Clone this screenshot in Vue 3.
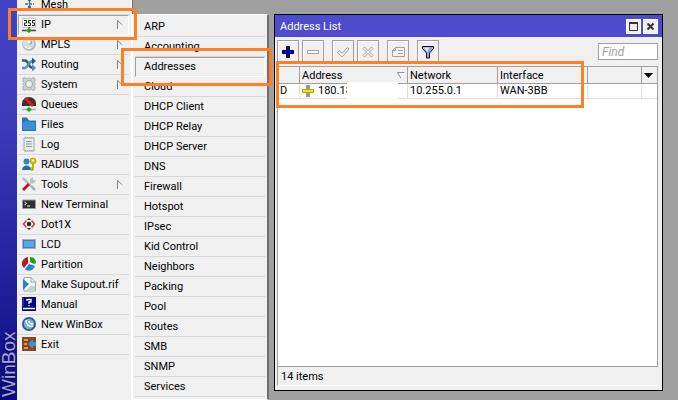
<script setup>
import { ref } from 'vue'

const menu = [
  { label: 'Mesh', icon: 'mesh' },
  { label: 'IP', icon: 'ip', sub: true, active: true },
  { label: 'MPLS', icon: 'mpls', sub: true },
  { label: 'Routing', icon: 'routing', sub: true },
  { label: 'System', icon: 'system', sub: true },
  { label: 'Queues', icon: 'queues' },
  { label: 'Files', icon: 'files' },
  { label: 'Log', icon: 'log' },
  { label: 'RADIUS', icon: 'radius' },
  { label: 'Tools', icon: 'tools', sub: true },
  { label: 'New Terminal', icon: 'terminal' },
  { label: 'Dot1X', icon: 'dot1x' },
  { label: 'LCD', icon: 'lcd' },
  { label: 'Partition', icon: 'partition' },
  { label: 'Make Supout.rif', icon: 'supout' },
  { label: 'Manual', icon: 'manual' },
  { label: 'New WinBox', icon: 'winbox' },
  { label: 'Exit', icon: 'exit' }
]

const submenu = [
  'ARP', 'Accounting', 'Addresses', 'Cloud', 'DHCP Client', 'DHCP Relay', 'DHCP Server',
  'DNS', 'Firewall', 'Hotspot', 'IPsec', 'Kid Control', 'Neighbors', 'Packing', 'Pool',
  'Routes', 'SMB', 'SNMP', 'Services'
]

const icons = {
  mesh: '<path d="M3 7h9M7.500 0v14" stroke="#3d6c96" stroke-width="1.500" stroke-dasharray="3 1"/><path d="M6 0h3v4H6zM6 9h3v5H6z" fill="#5a5a88"/>',
  ip: '<path d="M.5 .5h13v9H.5z" fill="#fff" stroke="#c4c4c4"/><path d="M2 2.500h2.500v2.500H2.500v2.500H5M9 2.500H6.500V5H8.500v2.500H6M13 2.500h-2.500V5h2v2.500H10" stroke="#222" fill="none"/><path d="M0 12.500h14" stroke="#444" stroke-width="1.500"/><path d="M7 9v2" stroke="#222"/><path d="M7 10l3 2.500L7 15l-3-2.500z" fill="#18a818"/>',
  mpls: '<circle cx="7" cy="7" r="6.800" fill="#a9b4b4"/><circle cx="6.500" cy="6.500" r="5.800" fill="#d4dcda"/><circle cx="8" cy="5.500" r="2" fill="#8d9a99"/><circle cx="7" cy="5" r="1.700" fill="#fff"/><path d="M3 9a5 5 0 006 2" stroke="#fff" fill="none"/>',
  routing: '<path d="M0 3.500h3c4 0 3 7 7 7" fill="none" stroke="#355674" stroke-width="2.500"/><path d="M10 7l4 4-4 3.500z" fill="#4b90c6"/><path d="M0 11h3c3 0 3-7 8-7" fill="none" stroke="#4b90c6" stroke-width="2.500"/><path d="M10 .5L14 4l-4 3.500z" fill="#355674"/>',
  system: '<path d="M1 1h3l1.500 1L7 .5 8.500 2 10 1h3v3l-1 1.500L13.500 7 12 8.500l1 1.500v3h-3l-1.500-1L7 13.500 5.500 12 4 13H1v-3l1-1.500L.5 7 2 5.500 1 4z" fill="#ccd4d2" stroke="#a3aeac"/><circle cx="7" cy="7" r="3.500" fill="#efefef" stroke="#98a4a2"/>',
  queues: '<path d="M0 9V6a7 6 0 0114 0v3z" fill="#3a3432"/><path d="M3 1l8 8" stroke="#e01b24" stroke-width="3"/><path d="M0 12.500h14" stroke="#a7b1af" stroke-width="1.500"/><path d="M7 10l3 2.500L7 15l-3-2.500z" fill="#18b018"/>',
  files: '<path d="M0 .5h5l2 3h7V14H0z" fill="#2a77b4"/><path d="M1 5h2l2-1.500L7 5h6v8H1z" fill="#3b91cf"/>',
  log: '<path d="M2 1h10v13H2z" fill="#e9eeec" stroke="#9aaaa6"/><path d="M4 4.500h6M4 7h6M4 9.500h6" stroke="#8ca09c"/><path d="M3 .5h9M3 13.500h9" stroke="#9aaaa6" stroke-dasharray="1 1"/>',
  radius: '<circle cx="4.500" cy="4.500" r="3" fill="#3184bd"/><path d="M0 13c0-6 9-6 9 0z" fill="#266da3"/><circle cx="11" cy="4" r="3" fill="#d8c800" stroke="#a79600" stroke-width=".7"/><circle cx="11" cy="3.500" r="1" fill="#fff"/><path d="M11 6v7M11 11h-2.500M11 13H9" stroke="#b9a900" stroke-width="1.700"/>',
  tools: '<path d="M1 0l4 3 8 9-1 1L3 5 0 2z" fill="#b5c0be"/><path d="M8 5V2l3-2v3l3 0-2 3-3 1z" fill="#b5c0be"/><path d="M1 13l6-6" stroke="#b5162b" stroke-width="3"/><path d="M9 9l4 4" stroke="#a7b3b1" stroke-width="2.500"/>',
  terminal: '<path d="M.5 3h13v8.500H.5z" fill="#303030" stroke="#9c9c9c"/><path d="M2.500 5l2 1.500-2 1.500M5 9h3" stroke="#fff" fill="none"/>',
  dot1x: '<circle cx="7" cy="7" r="2.300" fill="#292929"/><path d="M5 3l2-2 2 2zM5 11l2 2 2-2z" fill="#292929"/><path d="M4.500 3.500L1.500 7l3 3.500M9.500 3.500l3 3.500-3 3.500" fill="none" stroke="#c5404a" stroke-width="1.600"/>',
  lcd: '<path d="M.5 2.500h13v9H.5z" fill="#559fd7" stroke="#a6b1b2"/><path d="M1.500 3.500h11v7h-11z" fill="#5aa8e2" stroke="#2974ad" stroke-width=".7"/>',
  partition: '<path d="M6 0v6L2 11C-2 7 0 1 6 0z" fill="#be1725"/><path d="M8 0c4 0 6 3 6 6l-2 1-4-2z" fill="#219b22"/><path d="M7 7l6 2c-2 5-7 6-10 3z" fill="#2781c2"/>',
  supout: '<path d="M2 .5h7l4.500 4.500v9H2z" fill="#f3f7f6" stroke="#9cacaa"/><path d="M9 0v5h5" fill="none" stroke="#9cacaa"/><path d="M1 2l6 5-6 6z" fill="#2c83be"/><path d="M8 9h5v4H5z" fill="#c6d1ce"/>',
  manual: '<path d="M0 0h14v14H0z" fill="#00007e"/><path d="M5 4V2.500h4v2.500H7V7M7 8v1.300" stroke="#fff" stroke-width="1.300" fill="none"/><path d="M1 11.500h12" stroke="#fff" stroke-width="1.500"/><path d="M1 1v8" stroke="#5555ba"/>',
  winbox: '<circle cx="7" cy="7" r="7" fill="#285a91"/><circle cx="7" cy="7" r="5.200" fill="#76aedc"/><path d="M4 3c0 5 3 7 7 6M6.500 4c1 2 2 3 4.500 3" fill="none" stroke="#fff" stroke-width="1.500"/>',
  exit: '<path d="M0 0h14v14H0z" fill="#8c451c"/><path d="M2 2h4v2H2zM2 6h3v2H2zM2 10h4v2H2z" fill="#d59865"/><path d="M6 7l5-5v3h3v4h-3v3z" fill="#329bd5"/>'
}

const tools = [
  { label: 'Add', icon: '<path d="M6.500 1.500h3v4h4v3h-4v4h-3v-4h-4v-3h4z" fill="#0000f0" stroke="#000"/>' },
  { label: 'Remove', off: true, icon: '<path d="M2.500 5.500h11v3h-11z" fill="#fff" stroke="#a0a0a0"/>' },
  { label: 'Enable', gap: true, off: true, icon: '<path d="M2.500 7.500l2-2 2.500 3 5.500-6 1.500 1.500L7 12z" fill="#f8f8f8" stroke="#a0a0a0"/>' },
  { label: 'Disable', off: true, icon: '<path d="M3 3.500L4.500 2 8 5.500 11.500 2 13 3.500 9.500 7l3.500 3.500-1.500 1.500L8 8.500 4.500 12 3 10.500 6.500 7z" fill="#f8f8f8" stroke="#a0a0a0"/>' },
  { label: 'Comment', gap: true, off: true, icon: '<path d="M5.500 2.500h9v9h-12v-6z" fill="#f4f4f4" stroke="#a0a0a0"/><path d="M5.500 2.500v3h-3M8 5.500h5M8 8.500h5" fill="none" stroke="#a0a0a0"/>' },
  { label: 'Filter', gap: true, icon: '<path d="M2.500 1.500h11v2L9.500 8v5h-3V8l-4-4.500z" fill="#8fa8e8" stroke="#111"/><path d="M4 2.500h5L7.500 7z" fill="#e4ecff"/>' }
]

const find = ref('')
const rows = [{ flag: 'D', address: '180.18', network: '10.255.0.1', iface: 'WAN-3BB' }]
</script>

<template>
  <div class="desktop">
    <aside class="brand"><span>WinBox</span></aside>
    <nav class="menu" aria-label="Main menu">
      <ul class="list">
        <li v-for="m in menu" :key="m.label">
          <button type="button" class="item" :class="{ active: m.active }">
            <svg class="icon" width="15" height="15" viewBox="0 0 15 15" aria-hidden="true" v-html="icons[m.icon]"></svg>
            <span class="label">{{ m.label }}</span>
            <svg v-if="m.sub" class="arrow" width="7" height="10" viewBox="0 0 7 10" aria-hidden="true">
              <path d="M.5 9V.5L5.500 5" fill="none" stroke="#808080" />
              <path d="M5.500 5L.5 9.500" fill="none" stroke="#fff" />
            </svg>
          </button>
        </li>
      </ul>
      <div class="mark mark-menu"></div>
    </nav>
    <nav class="submenu" aria-label="IP">
      <ul class="list">
        <li v-for="s in submenu" :key="s">
          <button type="button" class="item" :class="{ active: s === 'Addresses' }">{{ s }}</button>
        </li>
      </ul>
      <div class="mark mark-sub"></div>
    </nav>
    <section class="window">
      <header class="title">
        <h1>Address List</h1>
        <button type="button" class="ctl" aria-label="Maximize">
          <svg width="11" height="11" viewBox="0 0 11 11"><path d="M1.500 1.500h8v8h-8z" fill="none" stroke="#333" /><path d="M1 2h9" stroke="#333" stroke-width="2" /></svg>
        </button>
        <button type="button" class="ctl" aria-label="Close">
          <svg width="11" height="11" viewBox="0 0 11 11"><path d="M2.500 2.500l6 6M8.500 2.500l-6 6" stroke="#333" stroke-width="2" /></svg>
        </button>
      </header>
      <div class="toolbar">
        <button v-for="t in tools" :key="t.label" type="button" class="tool" :class="{ gap: t.gap }" :disabled="t.off" :aria-label="t.label">
          <svg width="16" height="14" viewBox="0 0 16 14" v-html="t.icon"></svg>
        </button>
        <input v-model="find" class="find" type="text" placeholder="Find" aria-label="Find" />
      </div>
      <div class="grid">
        <table>
          <colgroup>
            <col class="c-flag" /><col class="c-addr" /><col class="c-net" /><col class="c-net" /><col /><col class="c-menu" />
          </colgroup>
          <thead>
            <tr>
              <th></th>
              <th>
                <div class="sort">Address
                  <svg width="8" height="8" viewBox="0 0 8 8" aria-hidden="true"><path d="M7.500 .5h-7l3.500 6" fill="none" stroke="#909090" /><path d="M4 7l3.500-6" stroke="#fff" /></svg>
                </div>
              </th>
              <th>Network</th>
              <th>Interface</th>
              <th></th>
              <th class="pick">
                <svg width="9" height="5" viewBox="0 0 9 5" aria-hidden="true"><path d="M0 0h9L4.500 5z" fill="#000" /></svg>
              </th>
            </tr>
          </thead>
          <tbody>
            <tr v-for="r in rows" :key="r.network">
              <td>{{ r.flag }}</td>
              <td>
                <div class="addr">
                  <svg width="12" height="12" viewBox="0 0 12 12" aria-hidden="true"><path d="M4 0h4v12H4z" fill="#8e9a98" /><path d="M.5 4.500h11v3H.5z" fill="#f2e600" stroke="#b8aa00" /></svg>
                  <span class="ip">{{ r.address }}</span>
                  <span class="blank"></span>
                </div>
              </td>
              <td>{{ r.network }}</td>
              <td>{{ r.iface }}</td>
              <td></td>
              <td class="last"></td>
            </tr>
          </tbody>
        </table>
      </div>
      <footer class="status">14 items</footer>
      <div class="mark mark-grid"></div>
    </section>
  </div>
</template>

<style>
body {
  background: #a0a0a0;
}
</style>

<style scoped>
.desktop {
  display: flex;
  height: 100vh;
  overflow: hidden;
  background: #a0a0a0;
  color: #000;
  font: 11px/16px Roboto, "Liberation Sans", sans-serif;
}
.desktop * {
  box-sizing: border-box;
}
button,
input {
  margin: 0;
  padding: 0;
  border: 0;
  border-radius: 0;
  color: inherit;
  font: inherit;
}
svg {
  display: block;
  flex: none;
}
.brand {
  display: flex;
  flex: none;
  align-items: center;
  width: 17px;
  padding-top: 3px;
  writing-mode: vertical-rl;
  transform: rotate(180deg);
  background: linear-gradient(to top, #4242c6, #3c3cba 30%, #2424a0 65%, #0c0c80);
  color: #a8a8d0;
  font: 19px/17px "Liberation Sans", sans-serif;
  text-shadow: -1px -1px 1px #06064c;
}
.menu {
  position: relative;
  flex: none;
  width: 116px;
  background: #f0f0f0;
  border-right: 1px solid #707070;
  box-shadow: inset -1px 0 #fff;
}
.list {
  margin: 0;
  padding: 0;
  list-style: none;
}
.menu .list {
  margin: -5px 3px 0 1px;
}
.item {
  display: flex;
  align-items: center;
  width: 100%;
  height: 20px;
  background: none;
  border-bottom: 1px solid #d8d8d8;
  text-align: left;
  white-space: nowrap;
}
.menu .item {
  padding: 0 5px 0 4px;
}
.label {
  flex: 1;
  margin-left: 4px;
}
.item.active {
  border: 1px solid #a0a0a0;
  border-right-color: #fff;
  border-bottom-color: #fff;
}
.menu .item.active {
  padding: 0 4px 0 3px;
}
.submenu {
  position: relative;
  flex: none;
  width: 137px;
  margin-top: 14px;
  margin-left: -1px;
  padding: 2px 2px 0 2px;
  background: #f0f0f0;
  border: 1px solid #fff;
  border-right: 2px solid #707070;
}
.submenu .item {
  padding-left: 9px;
}
.submenu .item.active {
  padding-left: 8px;
}
.window {
  position: relative;
  display: flex;
  flex: 1;
  flex-direction: column;
  min-width: 0;
  margin: 14px 15px 9px 5px;
  background: #f0f0f0;
  border: 1px solid #000;
}
.title {
  display: flex;
  align-items: center;
  gap: 2px;
  height: 22px;
  padding: 0 4px 0 5px;
  background: #4c4ccc;
  color: #fff;
}
h1 {
  flex: 1;
  margin: 0;
  padding-top: 2px;
  font: inherit;
}
.ctl {
  display: grid;
  place-items: center;
  width: 15px;
  height: 15px;
  background: #f0f0f0;
  border: 1px solid #fff;
}
.toolbar {
  display: flex;
  align-items: center;
  gap: 3px;
  height: 29px;
  padding: 0 4px 0 2px;
}
.tool {
  display: grid;
  place-items: center;
  width: 22px;
  height: 23px;
  background: #f0f0f0;
  border: 1px solid #a0a0a0;
  box-shadow: inset 1px 1px #fff;
}
.tool.gap {
  margin-left: 5px;
}
.find {
  width: 60px;
  height: 17px;
  margin-left: auto;
  padding: 0 3px;
  background: #fff;
  border: 1px solid #a0a0a0;
  font-size: 12px;
  font-style: italic;
}
.find::placeholder {
  color: #a0a0a0;
  opacity: 1;
}
.grid {
  flex: 1;
  margin: 0 4px 0 2px;
  background: #fff;
  border: 1px solid #a0a0a0;
}
table {
  width: 100%;
  table-layout: fixed;
  border-collapse: separate;
  border-spacing: 0;
}
.c-flag {
  width: 22px;
}
.c-addr {
  width: 108px;
}
.c-net {
  width: 90px;
}
.c-menu {
  width: 15px;
}
th,
td {
  padding: 0 2px;
  font-weight: normal;
  text-align: left;
  white-space: nowrap;
}
th {
  height: 17px;
  padding-top: 2px;
  line-height: 14px;
  background: #f0f0f0;
  border-right: 1px solid #a0a0a0;
  border-bottom: 1px solid #a0a0a0;
}
td {
  height: 15px;
  line-height: 14px;
  border-right: 1px solid #e0e0e0;
  border-bottom: 1px solid #e0e0e0;
}
.pick,
.last {
  padding: 0 2px;
  border-right: 0;
}
.sort,
.addr {
  display: flex;
  align-items: center;
  justify-content: space-between;
}
.addr {
  height: 14px;
  justify-content: flex-start;
}
.ip {
  width: 29px;
  margin-left: 4px;
}
.blank {
  position: relative;
  height: 18px;
  width: 51px;
  background: #fff;
}
.status {
  height: 19px;
  margin: 0 4px 4px 2px;
  padding: 2px 3px 0;
  border-left: 1px solid #a0a0a0;
  border-bottom: 1px solid #fff;
}
.mark {
  position: absolute;
  z-index: 5;
  border: 3px solid #ff7f27;
  pointer-events: none;
}
.mark-menu {
  top: 8px;
  right: -5px;
  left: -9px;
  height: 32px;
}
.mark-sub {
  top: 33px;
  right: -5px;
  left: -12px;
  height: 38px;
}
.mark-grid {
  top: 46px;
  left: 1px;
  width: 308px;
  height: 47px;
}
</style>
